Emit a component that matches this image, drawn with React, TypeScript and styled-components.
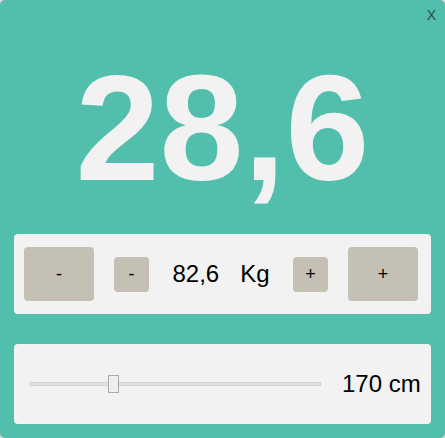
import React from "react";
import styled, { createGlobalStyle } from "styled-components";

const GlobalStyle = createGlobalStyle`
  html, body {
    margin: 0;
    padding: 0;
    background: #d9d9d9;
  }
  body {
    font-family: "Liberation Sans", Arial, sans-serif;
  }
`;

const Window = styled.div`
  width: 445px;
  height: 438px;
  box-sizing: border-box;
  background: #52bfad;
  border-radius: 5px;
  padding: 0 14px 14px;
  display: flex;
  flex-direction: column;
  font-family: "Liberation Sans", Arial, sans-serif;
`;

const TopBar = styled.div`
  height: 41px;
  box-sizing: border-box;
  display: flex;
  justify-content: flex-end;
  align-items: flex-start;
  padding-top: 7px;
  margin-right: -5px;
`;

const CloseButton = styled.button`
  border: none;
  background: transparent;
  padding: 0;
  margin: 0;
  font-family: "Liberation Sans", Arial, sans-serif;
  font-size: 14px;
  line-height: normal;
  color: #2c4a44;
  cursor: pointer;
`;

const BigValue = styled.div`
  font-size: 151px;
  font-weight: 700;
  line-height: normal;
  color: #f2f2f2;
  text-align: center;
  height: 193px;
`;

const Panel = styled.div<{ $gapAfter?: number }>`
  height: 80px;
  box-sizing: border-box;
  background: #f2f2f2;
  border-radius: 4px;
  display: flex;
  align-items: center;
  margin-bottom: ${(p) => p.$gapAfter ?? 0}px;
`;

const WeightPanel = styled(Panel)`
  justify-content: space-between;
  padding: 0 13px 0 10px;
`;

const HeightPanel = styled(Panel)`
  padding: 0 10px 0 15px;
  gap: 21px;
`;

const StepButton = styled.button<{ $big?: boolean }>`
  width: ${(p) => (p.$big ? 70 : 35)}px;
  height: ${(p) => (p.$big ? 54 : 35)}px;
  border: none;
  border-radius: 4px;
  background: #c4c0b4;
  color: #000;
  font-family: "Liberation Sans", Arial, sans-serif;
  font-size: 18px;
  padding: 0;
  display: flex;
  align-items: center;
  justify-content: center;
  cursor: pointer;
`;

const MiddleGroup = styled.div`
  display: flex;
  align-items: center;
`;

const Reading = styled.div`
  width: 144px;
  display: flex;
  justify-content: center;
  align-items: center;
  gap: 21px;
  font-size: 24px;
  color: #000;
`;

const SliderTrack = styled.div`
  position: relative;
  width: 292px;
  height: 4px;
  box-sizing: border-box;
  background: #e2e2e2;
  border: 1px solid #d2d2d2;
`;

const SliderThumb = styled.div`
  position: absolute;
  top: 50%;
  width: 11px;
  height: 18px;
  box-sizing: border-box;
  transform: translateY(-50%);
  background: #efefef;
  border: 1px solid #a9a9a9;
`;

const HeightLabel = styled.div`
  font-size: 24px;
  color: #000;
  white-space: nowrap;
`;

const MIN_H = 100;
const MAX_H = 350;

export default function App() {
  const weight = "82,6";
  const height = 170;
  const ratio = (height - MIN_H) / (MAX_H - MIN_H);
  const thumbLeft = Math.round(ratio * (292 - 11)) - 1;

  return (
    <>
      <GlobalStyle />
      <Window>
        <TopBar>
          <CloseButton>X</CloseButton>
        </TopBar>
        <BigValue>28,6</BigValue>
        <WeightPanel $gapAfter={30}>
          <StepButton $big>-</StepButton>
          <MiddleGroup>
            <StepButton>-</StepButton>
            <Reading>
              <span>{weight}</span>
              <span>Kg</span>
            </Reading>
            <StepButton>+</StepButton>
          </MiddleGroup>
          <StepButton $big>+</StepButton>
        </WeightPanel>
        <HeightPanel>
          <SliderTrack>
            <SliderThumb style={{ left: thumbLeft }} />
          </SliderTrack>
          <HeightLabel>{height} cm</HeightLabel>
        </HeightPanel>
      </Window>
    </>
  );
}
